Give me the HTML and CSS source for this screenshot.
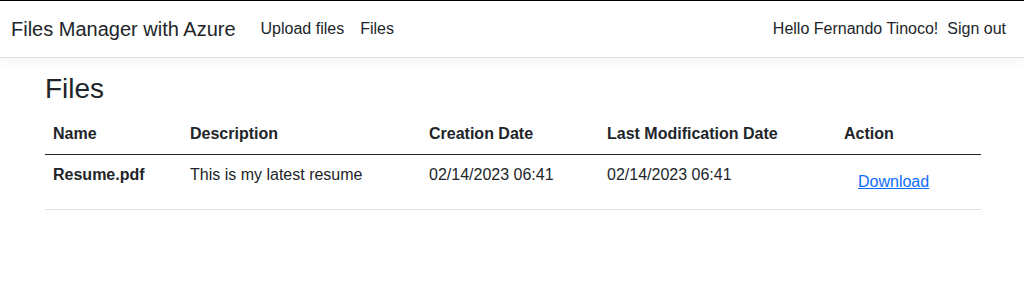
FILE: index.html
```html
<!DOCTYPE html>
<html lang="en">

<head>
    <meta charset="UTF-8">
    <meta name="viewport" content="width=device-width, initial-scale=1">
    <title>Files - Files Manager with Azure</title>
    <link rel="stylesheet" href="styles.css">
</head>

<body>
    <header>
        <nav class="navbar">
            <a class="navbar-brand" href="#">Files Manager with Azure</a>
            <ul class="nav-links">
                <li><a class="nav-link" href="#">Upload files</a></li>
                <li><a class="nav-link" href="#">Files</a></li>
            </ul>
            <div class="nav-user">
                <span class="greeting">Hello Fernando Tinoco!</span>
                <a class="nav-link signout" href="#">Sign out</a>
            </div>
        </nav>
    </header>

    <main class="container">
        <h2>Files</h2>
        <table class="table">
            <thead>
                <tr>
                    <th class="col-name">Name</th>
                    <th class="col-desc">Description</th>
                    <th class="col-created">Creation Date</th>
                    <th class="col-modified">Last Modification Date</th>
                    <th class="col-action">Action</th>
                </tr>
            </thead>
            <tbody>
                <tr>
                    <th>Resume.pdf</th>
                    <td>This is my latest resume</td>
                    <td>02/14/2023 06:41</td>
                    <td>02/14/2023 06:41</td>
                    <td><button type="button" class="btn-link">Download</button></td>
                </tr>
            </tbody>
        </table>
    </main>
</body>

</html>
```

FILE: styles.css
```css
body {
    margin: 0;
    font-family: 'Liberation Sans', Arial, sans-serif;
    font-size: 16px;
    line-height: 1.5;
    color: #212529;
    background-color: #fff;
}

a {
    color: #212529;
    text-decoration: none;
}

/* Navbar */
header {
    border-top: 1px solid #000;
    border-bottom: 1px solid #dee2e6;
    box-shadow: 0 4px 12px rgba(0, 0, 0, 0.05);
}

.navbar {
    display: flex;
    align-items: center;
    padding: 8px 12px 8px 11px;
}

.navbar-brand {
    font-size: 20px;
    padding: 5px 0;
    margin-right: 17px;
}

.nav-links {
    display: flex;
    list-style: none;
    margin: 0;
    padding: 0;
}

.nav-link {
    display: block;
    padding: 8px 8px;
}

.nav-user {
    margin-left: auto;
    display: flex;
    align-items: center;
}

.greeting {
    margin-right: 1px;
}

.nav-link.signout {
    padding-right: 6px;
}

/* Content */
.container {
    width: 936px;
    margin: 0 auto;
    padding: 14px 11px 0 13px;
}

h2 {
    font-size: 28px;
    font-weight: 500;
    line-height: 1.2;
    margin: 0 0 8px;
}

.table {
    width: 100%;
    border-collapse: collapse;
}

.table th,
.table td {
    padding: 8px;
    text-align: left;
    vertical-align: top;
    border-bottom: 1px solid #dee2e6;
}

.table thead th {
    border-bottom: 1px solid #212529;
}

.col-name { width: 121px; }
.col-desc { width: 223px; }
.col-created { width: 162px; }
.col-modified { width: 221px; }

.btn-link {
    font-family: inherit;
    font-size: 16px;
    line-height: 1.5;
    padding: 6px 12px;
    margin-left: 1px;
    color: #0d6efd;
    text-decoration: underline;
    background: none;
    border: 1px solid transparent;
    cursor: pointer;
}
```
